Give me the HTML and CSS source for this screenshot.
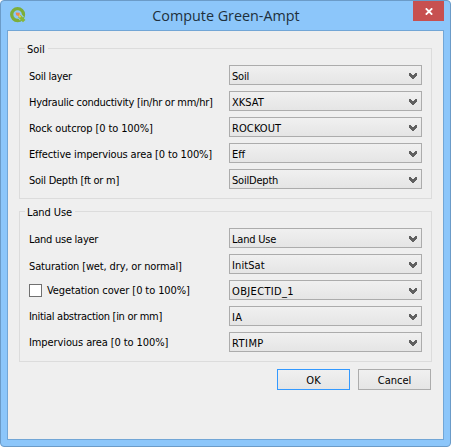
FILE: index.html
```
<!DOCTYPE html>
<html lang="en">
<head>
<meta charset="utf-8">
<title>Compute Green-Ampt</title>
<link rel="stylesheet" href="styles.css">
</head>
<body>
<svg width="0" height="0" class="defs"><symbol id="chev" viewBox="0 0 8 6"><path d="M0 0H2V1H3V2H5V1H6V0H8V3H7V4H6V5H5V6H3V5H2V4H1V3H0Z" fill="#606060"/></symbol></svg>
<div class="window">
  <header class="titlebar">
    <svg class="logo" width="17" height="16" viewBox="0 0 17 16">
      <circle cx="7.6" cy="7.6" r="5.9" fill="none" stroke="#7cae3a" stroke-width="3.3"/>
      <path d="M9.4 8.8L12 11.6" stroke="#8cc6f8" stroke-width="5.4"/>
      <path d="M9.2 8.8L14.2 14.2" stroke="#86b83a" stroke-width="3.4"/>
      <path d="M5.6 5.6L9.8 5.8L9.4 9.6L6.2 8.2Z" fill="#f0884a"/>
      <path d="M9 8.5L10.6 10.2" stroke="#e8c850" stroke-width="2"/>
    </svg>
    <h1>Compute Green-Ampt</h1>
    <button class="close" aria-label="Close"><svg width="8" height="7" viewBox="0 0 8 7"><path d="M.8.3L7.2 6.7M7.2.3L.8 6.7" stroke="#fff" stroke-width="1.8"/></svg></button>
  </header>
  <main class="client">
    <section class="group soil">
      <h2>Soil</h2>
      <div class="row"><label class="t30">Soil layer</label><div class="combo"><span class="t20">Soil</span><svg><use href="#chev"/></svg></div></div>
      <div class="row"><label class="t25">Hydraulic conductivity [in/hr or mm/hr]</label><div class="combo"><span>XKSAT</span><svg><use href="#chev"/></svg></div></div>
      <div class="row"><label class="t10">Rock outcrop [0 to 100%]</label><div class="combo"><span class="w10">ROCKOUT</span><svg><use href="#chev"/></svg></div></div>
      <div class="row"><label class="t15">Effective impervious area [0 to 100%]</label><div class="combo"><span>Eff</span><svg><use href="#chev"/></svg></div></div>
      <div class="row"><label class="t25">Soil Depth [ft or m]</label><div class="combo"><span class="t20">SoilDepth</span><svg><use href="#chev"/></svg></div></div>
    </section>
    <section class="group land">
      <h2 class="t10">Land Use</h2>
      <div class="row"><label class="t25">Land use layer</label><div class="combo"><span class="t20">Land Use</span><svg><use href="#chev"/></svg></div></div>
      <div class="row"><label class="t15 low">Saturation [wet, dry, or normal]</label><div class="combo"><span class="w10">InitSat</span><svg><use href="#chev"/></svg></div></div>
      <div class="row"><label class="t10 check"><i class="box"></i><span>Vegetation cover [0 to 100%]</span></label><div class="combo"><span class="w35">OBJECTID_1</span><svg><use href="#chev"/></svg></div></div>
      <div class="row"><label class="t30 high">Initial abstraction [in or mm]</label><div class="combo"><span class="w35">IA</span><svg><use href="#chev"/></svg></div></div>
      <div class="row"><label class="t10 high">Impervious area [0 to 100%]</label><div class="combo"><span class="w45">RTIMP</span><svg><use href="#chev"/></svg></div></div>
    </section>
    <footer class="actions"><button class="btn default">OK</button><button class="btn">Cancel</button></footer>
  </main>
</div>
</body>
</html>
```
FILE: styles.css
```
* { box-sizing: border-box; }
body { margin: 0; background: #fff; overflow: hidden; font: 11px/20px "DejaVu Sans Condensed", "Noto Sans", sans-serif; color: #000; }
.defs { display: block; }
h1, h2 { margin: 0; font-weight: normal; }
button { font: inherit; color: inherit; margin: 0; padding: 0; }
.window { width: 451px; height: 447px; padding: 0 6px 6px; background: #8cc6fa; border: 1px solid #6b9bc8; border-radius: 4px; }
.titlebar { display: grid; grid-template-columns: 31px 1fr 31px; height: 29px; margin-right: -1px; align-items: start; }
.logo { margin: 6px 0 0 3px; }
h1 { font: 14.35px/29px "Open Sans", sans-serif; text-align: center; color: #20303c; }
.close { width: 31px; height: 20px; border: 0; background: #c75050; display: flex; align-items: center; justify-content: center; }
.titlebar .close { margin-left: -1px; }
.client { height: 410px; background: #efefef; border: 1px solid #72a6d6; padding: 17px 11px 0; }
.group { border: 1px solid #dcdcdc; width: 413px; }
.soil { height: 151px; margin-bottom: 12px; }
.land { height: 151px; }
h2 { font-size: 11px; line-height: 16px; height: 14px; width: max-content; margin: -7px 0 9px 5px; padding: 0 3px 0 2px; background: #efefef; }
.row { display: grid; grid-template: 20px / 200px 193px; margin: 0 0 6px 9px; white-space: nowrap; }
.row label { padding-top: 2px; }
.row .low { padding-top: 3px; }
.row .high { padding-top: 1px; }
.row .check { display: flex; align-items: center; height: 20px; padding-top: 0; }
.check span { padding-top: 2px; }
.box { flex: none; width: 13px; height: 13px; border: 1px solid #707070; background: #fff; margin-right: 5px; }
.combo { display: flex; justify-content: space-between; align-items: flex-start; height: 20px; padding: 0 4px 0 2px; border: 1px solid #acacac; background: linear-gradient(#f0f0f0, #e5e5e5); }
.combo span { line-height: 22px; }
.combo svg { width: 8px; height: 6px; margin-top: 7px; }
.actions { display: flex; justify-content: flex-end; gap: 8px; padding: 7px 1px 0 0; }
.btn { width: 73px; height: 21px; padding-top: 1px; border: 1px solid #acacac; background: linear-gradient(#f0f0f0, #e5e5e5); }
.btn.default { border-color: #3399ff; }
.t10 { letter-spacing: -.1px; }
.t15 { letter-spacing: -.14px; }
.t20 { letter-spacing: -.2px; }
.t25 { letter-spacing: -.26px; }
.t30 { letter-spacing: -.3px; }
.w10 { letter-spacing: .1px; }
.w35 { letter-spacing: .35px; }
.w45 { letter-spacing: .45px; }
```
